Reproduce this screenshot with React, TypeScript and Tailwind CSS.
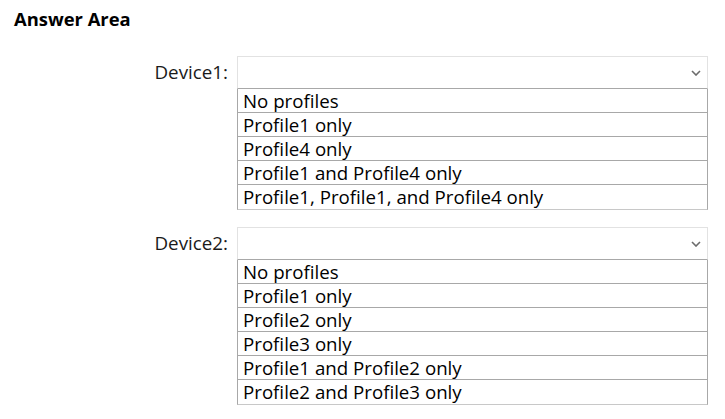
import React from "react"

const font = { fontFamily: '"Open Sans", "Noto Sans", sans-serif' }

const Chevron = () => (
  <svg width="10" height="6" viewBox="0 0 10 6" className="text-[#6b6b6b]">
    <path d="M1 1l4 4 4-4" fill="none" stroke="currentColor" strokeWidth="1.6" />
  </svg>
)

const DeviceSelect = ({ label, options }: { label: string; options: string[] }) => {
  return (
    <div className="flex">
      <div className="w-[228px] h-[33px] flex items-center justify-end text-[18.8px] text-[#1a1a1a]">{label}</div>
      <div className="ml-[9px] w-[471px]">
        {/* empty select box */}
        <div className="h-[33px] border border-[#e2e2e2] border-b-[#a8a8a8] flex items-center justify-end pr-[6px]">
          <Chevron />
        </div>
        <ul className="border-x border-[#a8a8a8] border-b border-b-[#c8c8c8]">
          {options.map((o, i) => (
            <li
              key={o}
              className={
                "h-[24px] leading-[23px] pl-[5px] text-[18.7px] text-black whitespace-nowrap " +
                (i < options.length - 1 ? "border-b border-[#a8a8a8]" : "")
              }
            >
              {o}
            </li>
          ))}
        </ul>
      </div>
    </div>
  )
}

const App = () => {
  return (
    <div className="w-[725px] h-[419px] bg-white pt-[6px]" style={font}>
      <h2 className="pl-[14px] text-[18.4px] font-bold text-black leading-[25px]">Answer Area</h2>
      <div className="mt-[25px] flex flex-col gap-[17px]">
        <DeviceSelect
          label="Device1:"
          options={["No profiles", "Profile1 only", "Profile4 only", "Profile1 and Profile4 only", "Profile1, Profile1, and Profile4 only"]}
        />
        <DeviceSelect
          label="Device2:"
          options={[
            "No profiles",
            "Profile1 only",
            "Profile2 only",
            "Profile3 only",
            "Profile1 and Profile2 only",
            "Profile2 and Profile3 only",
          ]}
        />
      </div>
    </div>
  )
}

export default App
